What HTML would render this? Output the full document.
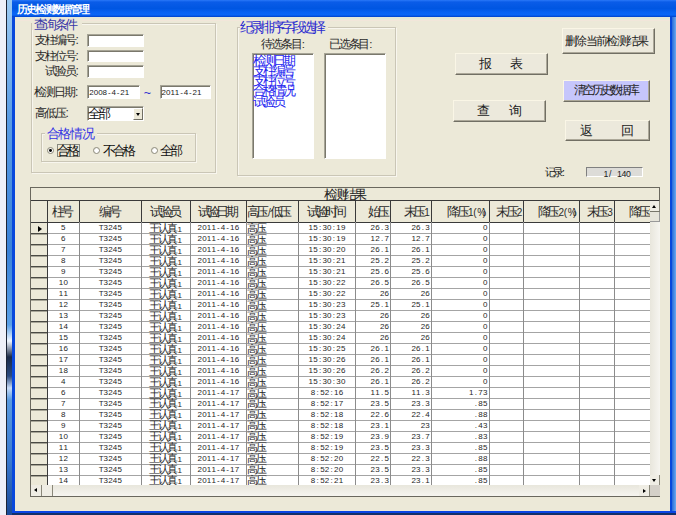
<!DOCTYPE html>
<html><head><meta charset="utf-8"><style>
html,body{margin:0;padding:0;width:676px;height:515px;overflow:hidden;background:#ece9d8}
body{position:relative;font-family:"Liberation Sans",sans-serif}
div{position:absolute}
.t{white-space:nowrap}
i{font-style:normal;display:inline-flex;justify-content:center;width:10px}
b{font-weight:normal}
s{text-decoration:none;display:inline-block;text-align:center;width:var(--p,4.65px)}
</style></head><body>
<div style="left:0px;top:0px;width:676px;height:515px;background:#eef0f9"></div>
<div style="left:6px;top:0px;width:1px;height:515px;background:#1c2436"></div>
<div style="left:7px;top:0px;width:5px;height:515px;background:linear-gradient(180deg,#9ccaf2 0px,#5a9ce4 120px,#3a82d8 250px,#5aa0e8 325px,#f0f6ff 341px,#1a2a48 357px,#2a4a80 376px,#c8dcf8 388px,#5a9ae0 400px,#3a7ad0 460px,#1a4a98 515px)"></div>
<div style="left:12px;top:0px;width:664px;height:515px;background:#0848dc"></div>
<div style="left:672px;top:17px;width:4px;height:498px;background:linear-gradient(90deg,#2a6ad8,#6aaaf0)"></div>
<div style="left:12px;top:0px;width:664px;height:17px;background:linear-gradient(180deg,#2a78f8 0%,#0a5ce8 12%,#0056e2 50%,#0862f2 72%,#0a66f6 88%,#0040c8 100%)"></div>
<div class="t" style="left:18px;top:3.5px;font-size:10.5px;line-height:10.5px;color:#fff;font-weight:bold;"><i style="width:8.9px">历</i><i style="width:8.9px">史</i><i style="width:8.9px">检</i><i style="width:8.9px">测</i><i style="width:8.9px">数</i><i style="width:8.9px">据</i><i style="width:8.9px">管</i><i style="width:8.9px">理</i></div>
<div style="left:12px;top:511px;width:664px;height:2px;background:#0a44e4"></div>
<div style="left:12px;top:513px;width:664px;height:2px;background:#12306a"></div>
<div style="left:15px;top:17px;width:655px;height:494px;background:#ece9d8"></div>
<div style="left:15px;top:17px;width:655px;height:1.5px;background:#e6e8d8"></div>
<div style="left:15px;top:19.5px;width:655px;height:1.5px;background:#f2e6da"></div>
<div style="left:30.5px;top:23px;width:185px;height:149.5px;border:1px solid #cac6b6;box-shadow:inset 1px 1px 0 #f8f6ee,1px 1px 0 #f8f6ee;box-sizing:border-box"></div>
<div style="left:31.5px;top:18px;width:50px;height:12px;background:#ece9d8"></div>
<div class="t" style="left:35.5px;top:18.5px;font-size:12.5px;line-height:12.5px;color:#3a3aa8;"><i style="width:10.3px">查</i><i style="width:10.3px">询</i><i style="width:10.3px">条</i><i style="width:10.3px">件</i></div>
<div class="t" style="left:35.5px;top:33.5px;font-size:12px;line-height:12px;color:#2a2a2a;"><i style="width:10px">支</i><i style="width:10px">柱</i><i style="width:10px">编</i><i style="width:10px">号</i>:</div>
<div class="t" style="left:35.5px;top:49.5px;font-size:12px;line-height:12px;color:#2a2a2a;"><i style="width:10px">支</i><i style="width:10px">柱</i><i style="width:10px">位</i><i style="width:10px">号</i>:</div>
<div class="t" style="left:45.5px;top:65px;font-size:12px;line-height:12px;color:#2a2a2a;"><i style="width:10px">试</i><i style="width:10px">验</i><i style="width:10px">员</i>:</div>
<div class="t" style="left:35px;top:85.5px;font-size:12px;line-height:12px;color:#2a2a2a;"><i style="width:10px">检</i><i style="width:10px">测</i><i style="width:10px">日</i><i style="width:10px">期</i>:</div>
<div class="t" style="left:35.5px;top:106.5px;font-size:12px;line-height:12px;color:#2a2a2a;"><i style="width:10px">高</i><i style="width:10px">低</i><i style="width:10px">压</i>:</div>
<div style="left:87px;top:34px;width:57px;height:13px;background:#fff;border-top:1px solid #a6a496;border-left:1px solid #a6a496;border-bottom:1px solid #fff;border-right:1px solid #fff;box-shadow:inset 1px 1px 0 #7a786c;box-sizing:border-box"></div>
<div style="left:87px;top:49.7px;width:57px;height:12.3px;background:#fff;border-top:1px solid #a6a496;border-left:1px solid #a6a496;border-bottom:1px solid #fff;border-right:1px solid #fff;box-shadow:inset 1px 1px 0 #7a786c;box-sizing:border-box"></div>
<div style="left:87px;top:65px;width:57px;height:12.5px;background:#fff;border-top:1px solid #a6a496;border-left:1px solid #a6a496;border-bottom:1px solid #fff;border-right:1px solid #fff;box-shadow:inset 1px 1px 0 #7a786c;box-sizing:border-box"></div>
<div style="left:87px;top:85.4px;width:53px;height:13.6px;background:#fff;border-top:1px solid #a6a496;border-left:1px solid #a6a496;border-bottom:1px solid #fff;border-right:1px solid #fff;box-shadow:inset 1px 1px 0 #7a786c;box-sizing:border-box"></div>
<div style="left:159.5px;top:85.4px;width:51.5px;height:13.6px;background:#fff;border-top:1px solid #a6a496;border-left:1px solid #a6a496;border-bottom:1px solid #fff;border-right:1px solid #fff;box-shadow:inset 1px 1px 0 #7a786c;box-sizing:border-box"></div>
<div class="t" style="left:89.3px;top:89.4px;font-size:8px;line-height:8px;color:#222;--p:4.45px"><s>2</s><s>0</s><s>0</s><s>8</s><s>-</s><s>4</s><s>-</s><s>2</s><s>1</s></div>
<div class="t" style="left:161.5px;top:89.4px;font-size:8px;line-height:8px;color:#222;--p:4.45px"><s>2</s><s>0</s><s>1</s><s>1</s><s>-</s><s>4</s><s>-</s><s>2</s><s>1</s></div>
<div class="t" style="left:143.8px;top:86.8px;font-size:12.5px;line-height:12.5px;color:#3030d0;">~</div>
<div style="left:87.2px;top:106.2px;width:56.4px;height:14.8px;background:#fff;border-top:1px solid #a6a496;border-left:1px solid #a6a496;border-bottom:1px solid #fff;border-right:1px solid #fff;box-shadow:inset 1px 1px 0 #7a786c;box-sizing:border-box"></div>
<div style="left:133px;top:108px;width:9.7px;height:12px;background:#ece9d8;border-top:1px solid #fff;border-left:1px solid #fff;border-right:1px solid #716f64;border-bottom:1px solid #716f64;box-sizing:border-box"></div>
<div style="left:135.8px;top:113px;width:0;height:0;border-left:2.5px solid transparent;border-right:2.5px solid transparent;border-top:3px solid #000"></div>
<div class="t" style="left:89px;top:107.8px;font-size:12.5px;line-height:12.5px;color:#111;"><i style="width:10.3px">全</i><i style="width:10.3px">部</i></div>
<div style="left:41px;top:132.8px;width:155px;height:29.5px;border:1px solid #cac6b6;box-shadow:inset 1px 1px 0 #f8f6ee,1px 1px 0 #f8f6ee;box-sizing:border-box"></div>
<div style="left:45px;top:127px;width:52px;height:12px;background:#ece9d8"></div>
<div class="t" style="left:47.2px;top:126.5px;font-size:13px;line-height:13px;color:#3434e4;"><i style="width:11.8px">合</i><i style="width:11.8px">格</i><i style="width:11.8px">情</i><i style="width:11.8px">况</i></div>
<div style="left:47.2px;top:146.8px;width:7px;height:7px;border-radius:50%;background:radial-gradient(circle at 60% 60%,#fff 40%,#dcdad0 100%);border:1px solid #8e8c7e;box-sizing:border-box"></div>
<div style="left:49.4px;top:149px;width:2.8px;height:2.8px;border-radius:50%;background:#000"></div>
<div style="left:93px;top:146.8px;width:7px;height:7px;border-radius:50%;background:radial-gradient(circle at 60% 60%,#fff 40%,#dcdad0 100%);border:1px solid #8e8c7e;box-sizing:border-box"></div>
<div style="left:150.7px;top:146.8px;width:7px;height:7px;border-radius:50%;background:radial-gradient(circle at 60% 60%,#fff 40%,#dcdad0 100%);border:1px solid #8e8c7e;box-sizing:border-box"></div>
<div style="left:57.2px;top:143.5px;width:22.5px;height:13px;border:1px solid #8a8a80;box-sizing:border-box"></div>
<div class="t" style="left:58.2px;top:144.5px;font-size:12.5px;line-height:12.5px;color:#111;"><i style="width:10px">合</i><i style="width:10px">格</i></div>
<div class="t" style="left:104.5px;top:144.5px;font-size:12.5px;line-height:12.5px;color:#111;"><i style="width:10px">不</i><i style="width:10px">合</i><i style="width:10px">格</i></div>
<div class="t" style="left:160.8px;top:144.5px;font-size:12.5px;line-height:12.5px;color:#111;"><i style="width:10.5px">全</i><i style="width:10.5px">部</i></div>
<div style="left:236.5px;top:27.4px;width:159.5px;height:148.6px;border:1px solid #cac6b6;box-shadow:inset 1px 1px 0 #f8f6ee,1px 1px 0 #f8f6ee;box-sizing:border-box"></div>
<div style="left:240px;top:21px;width:88px;height:12px;background:#ece9d8"></div>
<div class="t" style="left:241.5px;top:20.6px;font-size:13.5px;line-height:13.5px;color:#2a2ad0;"><i style="width:10.4px">纪</i><i style="width:10.4px">录</i><i style="width:10.4px">排</i><i style="width:10.4px">序</i><i style="width:10.4px">字</i><i style="width:10.4px">段</i><i style="width:10.4px">选</i><i style="width:10.4px">择</i></div>
<div class="t" style="left:262.5px;top:39px;font-size:11.5px;line-height:11.5px;color:#2a2a2a;"><i style="width:9.8px">待</i><i style="width:9.8px">选</i><i style="width:9.8px">条</i><i style="width:9.8px">目</i>:</div>
<div class="t" style="left:330px;top:39px;font-size:11.5px;line-height:11.5px;color:#2a2a2a;"><i style="width:9.8px">已</i><i style="width:9.8px">选</i><i style="width:9.8px">条</i><i style="width:9.8px">目</i>:</div>
<div style="left:252.4px;top:53px;width:62px;height:105.6px;background:#fff;border-top:1px solid #a6a496;border-left:1px solid #a6a496;border-bottom:1px solid #fff;border-right:1px solid #fff;box-shadow:inset 1px 1px 0 #7a786c;box-sizing:border-box"></div>
<div style="left:324.3px;top:53px;width:62px;height:106px;background:#fff;border-top:1px solid #a6a496;border-left:1px solid #a6a496;border-bottom:1px solid #fff;border-right:1px solid #fff;box-shadow:inset 1px 1px 0 #7a786c;box-sizing:border-box"></div>
<div class="t" style="left:254.3px;top:53.8px;font-size:13px;line-height:13px;color:#2424f0;"><i style="width:10.2px">检</i><i style="width:10.2px">测</i><i style="width:10.2px">日</i><i style="width:10.2px">期</i></div>
<div class="t" style="left:254.3px;top:64px;font-size:13px;line-height:13px;color:#2424f0;"><i style="width:10.2px">支</i><i style="width:10.2px">柱</i><i style="width:10.2px">编</i><i style="width:10.2px">号</i></div>
<div class="t" style="left:254.3px;top:74.2px;font-size:13px;line-height:13px;color:#2424f0;"><i style="width:10.2px">支</i><i style="width:10.2px">柱</i><i style="width:10.2px">位</i><i style="width:10.2px">号</i></div>
<div class="t" style="left:254.3px;top:84.4px;font-size:13px;line-height:13px;color:#2424f0;"><i style="width:10.2px">合</i><i style="width:10.2px">格</i><i style="width:10.2px">情</i><i style="width:10.2px">况</i></div>
<div class="t" style="left:254.3px;top:94.6px;font-size:13px;line-height:13px;color:#2424f0;"><i style="width:10.2px">试</i><i style="width:10.2px">验</i><i style="width:10.2px">员</i></div>
<div style="left:561.5px;top:27.5px;width:93.2px;height:26px;background:#ece9dc;border-top:1px solid #faf6e6;border-left:1px solid #faf6e6;border-right:1px solid #716f64;border-bottom:1px solid #716f64;box-shadow:inset -1px -1px 0 #aca899;box-sizing:border-box"></div>
<div class="t" style="left:566px;top:35.8px;font-size:11.5px;line-height:11.5px;color:#222;"><i style="width:10.3px">删</i><i style="width:10.3px">除</i><i style="width:10.3px">当</i><i style="width:10.3px">前</i><i style="width:10.3px">检</i><i style="width:10.3px">测</i><i style="width:10.3px">结</i><i style="width:10.3px">果</i></div>
<div style="left:454.6px;top:53.3px;width:93px;height:21.4px;background:#ece9dc;border-top:1px solid #faf6e6;border-left:1px solid #faf6e6;border-right:1px solid #716f64;border-bottom:1px solid #716f64;box-shadow:inset -1px -1px 0 #aca899;box-sizing:border-box"></div>
<div class="t" style="left:480.2px;top:58px;font-size:12.5px;line-height:12.5px;color:#222;"><i style="width:10px">报</i></div>
<div class="t" style="left:511px;top:58px;font-size:12.5px;line-height:12.5px;color:#222;"><i style="width:10px">表</i></div>
<div style="left:562.8px;top:79.5px;width:87.5px;height:22.2px;background:#c6c6fc;border-top:1px solid #faf6e6;border-left:1px solid #faf6e6;border-right:1px solid #716f64;border-bottom:1px solid #716f64;box-shadow:inset -1px -1px 0 #aca899;box-sizing:border-box"></div>
<div class="t" style="left:575px;top:84.5px;font-size:11.5px;line-height:11.5px;color:#222;"><i style="width:9px">清</i><i style="width:9px">空</i><i style="width:9px">历</i><i style="width:9px">史</i><i style="width:9px">数</i><i style="width:9px">据</i><i style="width:9px">库</i></div>
<div style="left:453.3px;top:100.3px;width:92.7px;height:22px;background:#ece9dc;border-top:1px solid #faf6e6;border-left:1px solid #faf6e6;border-right:1px solid #716f64;border-bottom:1px solid #716f64;box-shadow:inset -1px -1px 0 #aca899;box-sizing:border-box"></div>
<div class="t" style="left:478.8px;top:104.5px;font-size:12.5px;line-height:12.5px;color:#222;"><i style="width:10px">查</i></div>
<div class="t" style="left:510.5px;top:104.5px;font-size:12.5px;line-height:12.5px;color:#222;"><i style="width:10px">询</i></div>
<div style="left:565px;top:119.7px;width:84.5px;height:21px;background:#ece9dc;border-top:1px solid #faf6e6;border-left:1px solid #faf6e6;border-right:1px solid #716f64;border-bottom:1px solid #716f64;box-shadow:inset -1px -1px 0 #aca899;box-sizing:border-box"></div>
<div class="t" style="left:581px;top:125px;font-size:12.5px;line-height:12.5px;color:#222;"><i style="width:10px">返</i></div>
<div class="t" style="left:622px;top:125px;font-size:12.5px;line-height:12.5px;color:#222;"><i style="width:10px">回</i></div>
<div class="t" style="left:546px;top:166.5px;font-size:10.5px;line-height:10.5px;color:#222;"><i style="width:8px">记</i><i style="width:8px">录</i>:</div>
<div style="left:586px;top:167px;width:56.8px;height:10.2px;background:#dddcd8;border-top:1px solid #808080;border-left:1px solid #808080;border-bottom:1px solid #fff;border-right:1px solid #fff;box-sizing:border-box"></div>
<div class="t" style="left:603.5px;top:170px;font-size:8.8px;line-height:8.8px;color:#222;--p:4.5px"><s>1</s><s>/</s><s> </s><s>1</s><s>4</s><s>0</s></div>
<div style="left:30px;top:187px;width:630px;height:310px;background:#ece9d8;border:1px solid #6a685e;box-sizing:border-box"></div>
<div style="left:31px;top:200px;width:628px;height:1px;background:#3a3a3a"></div>
<div class="t" style="left:326px;top:187.6px;font-size:13px;line-height:13px;color:#222;"><i style="width:9.8px">检</i><i style="width:9.8px">测</i><i style="width:9.8px">结</i><i style="width:9.8px">果</i></div>
<div style="left:31px;top:201px;width:618.5px;height:284.2px;overflow:hidden">
<div style="left:17px;top:21.1px;width:640px;height:263.1px;background:#fff"></div>
<div style="left:16px;top:0px;width:1px;height:21.1px;background:#3a3a3a"></div>
<div style="left:48px;top:0px;width:1px;height:21.1px;background:#3a3a3a"></div>
<div style="left:110px;top:0px;width:1px;height:21.1px;background:#3a3a3a"></div>
<div style="left:159px;top:0px;width:1px;height:21.1px;background:#3a3a3a"></div>
<div style="left:215px;top:0px;width:1px;height:21.1px;background:#3a3a3a"></div>
<div style="left:267px;top:0px;width:1px;height:21.1px;background:#3a3a3a"></div>
<div style="left:324px;top:0px;width:1px;height:21.1px;background:#3a3a3a"></div>
<div style="left:359px;top:0px;width:1px;height:21.1px;background:#3a3a3a"></div>
<div style="left:400px;top:0px;width:1px;height:21.1px;background:#3a3a3a"></div>
<div style="left:458px;top:0px;width:1px;height:21.1px;background:#3a3a3a"></div>
<div style="left:492px;top:0px;width:1px;height:21.1px;background:#3a3a3a"></div>
<div style="left:548px;top:0px;width:1px;height:21.1px;background:#3a3a3a"></div>
<div style="left:583px;top:0px;width:1px;height:21.1px;background:#3a3a3a"></div>
<div style="left:0px;top:21.1px;width:660px;height:1px;background:#3a3a3a"></div>
<div style="left:0px;top:32px;width:17px;height:1px;background:#4a4a44"></div>
<div style="left:0px;top:33px;width:17px;height:1px;background:#a8a698"></div>
<div style="left:17px;top:32px;width:640px;height:1px;background:#a4a4a4"></div>
<div style="left:0px;top:43px;width:17px;height:1px;background:#4a4a44"></div>
<div style="left:0px;top:44px;width:17px;height:1px;background:#a8a698"></div>
<div style="left:17px;top:43px;width:640px;height:1px;background:#a4a4a4"></div>
<div style="left:0px;top:54px;width:17px;height:1px;background:#4a4a44"></div>
<div style="left:0px;top:55px;width:17px;height:1px;background:#a8a698"></div>
<div style="left:17px;top:54px;width:640px;height:1px;background:#a4a4a4"></div>
<div style="left:0px;top:65px;width:17px;height:1px;background:#4a4a44"></div>
<div style="left:0px;top:66px;width:17px;height:1px;background:#a8a698"></div>
<div style="left:17px;top:65px;width:640px;height:1px;background:#a4a4a4"></div>
<div style="left:0px;top:76px;width:17px;height:1px;background:#4a4a44"></div>
<div style="left:0px;top:77px;width:17px;height:1px;background:#a8a698"></div>
<div style="left:17px;top:76px;width:640px;height:1px;background:#a4a4a4"></div>
<div style="left:0px;top:87px;width:17px;height:1px;background:#4a4a44"></div>
<div style="left:0px;top:88px;width:17px;height:1px;background:#a8a698"></div>
<div style="left:17px;top:87px;width:640px;height:1px;background:#a4a4a4"></div>
<div style="left:0px;top:98px;width:17px;height:1px;background:#4a4a44"></div>
<div style="left:0px;top:99px;width:17px;height:1px;background:#a8a698"></div>
<div style="left:17px;top:98px;width:640px;height:1px;background:#a4a4a4"></div>
<div style="left:0px;top:109px;width:17px;height:1px;background:#4a4a44"></div>
<div style="left:0px;top:110px;width:17px;height:1px;background:#a8a698"></div>
<div style="left:17px;top:109px;width:640px;height:1px;background:#a4a4a4"></div>
<div style="left:0px;top:120px;width:17px;height:1px;background:#4a4a44"></div>
<div style="left:0px;top:121px;width:17px;height:1px;background:#a8a698"></div>
<div style="left:17px;top:120px;width:640px;height:1px;background:#a4a4a4"></div>
<div style="left:0px;top:131px;width:17px;height:1px;background:#4a4a44"></div>
<div style="left:0px;top:132px;width:17px;height:1px;background:#a8a698"></div>
<div style="left:17px;top:131px;width:640px;height:1px;background:#a4a4a4"></div>
<div style="left:0px;top:142px;width:17px;height:1px;background:#4a4a44"></div>
<div style="left:0px;top:143px;width:17px;height:1px;background:#a8a698"></div>
<div style="left:17px;top:142px;width:640px;height:1px;background:#a4a4a4"></div>
<div style="left:0px;top:153px;width:17px;height:1px;background:#4a4a44"></div>
<div style="left:0px;top:154px;width:17px;height:1px;background:#a8a698"></div>
<div style="left:17px;top:153px;width:640px;height:1px;background:#a4a4a4"></div>
<div style="left:0px;top:164px;width:17px;height:1px;background:#4a4a44"></div>
<div style="left:0px;top:165px;width:17px;height:1px;background:#a8a698"></div>
<div style="left:17px;top:164px;width:640px;height:1px;background:#a4a4a4"></div>
<div style="left:0px;top:175px;width:17px;height:1px;background:#4a4a44"></div>
<div style="left:0px;top:176px;width:17px;height:1px;background:#a8a698"></div>
<div style="left:17px;top:175px;width:640px;height:1px;background:#a4a4a4"></div>
<div style="left:0px;top:186px;width:17px;height:1px;background:#4a4a44"></div>
<div style="left:0px;top:187px;width:17px;height:1px;background:#a8a698"></div>
<div style="left:17px;top:186px;width:640px;height:1px;background:#a4a4a4"></div>
<div style="left:0px;top:197px;width:17px;height:1px;background:#4a4a44"></div>
<div style="left:0px;top:198px;width:17px;height:1px;background:#a8a698"></div>
<div style="left:17px;top:197px;width:640px;height:1px;background:#a4a4a4"></div>
<div style="left:0px;top:208px;width:17px;height:1px;background:#4a4a44"></div>
<div style="left:0px;top:209px;width:17px;height:1px;background:#a8a698"></div>
<div style="left:17px;top:208px;width:640px;height:1px;background:#a4a4a4"></div>
<div style="left:0px;top:219px;width:17px;height:1px;background:#4a4a44"></div>
<div style="left:0px;top:220px;width:17px;height:1px;background:#a8a698"></div>
<div style="left:17px;top:219px;width:640px;height:1px;background:#a4a4a4"></div>
<div style="left:0px;top:230px;width:17px;height:1px;background:#4a4a44"></div>
<div style="left:0px;top:231px;width:17px;height:1px;background:#a8a698"></div>
<div style="left:17px;top:230px;width:640px;height:1px;background:#a4a4a4"></div>
<div style="left:0px;top:241px;width:17px;height:1px;background:#4a4a44"></div>
<div style="left:0px;top:242px;width:17px;height:1px;background:#a8a698"></div>
<div style="left:17px;top:241px;width:640px;height:1px;background:#a4a4a4"></div>
<div style="left:0px;top:252px;width:17px;height:1px;background:#4a4a44"></div>
<div style="left:0px;top:253px;width:17px;height:1px;background:#a8a698"></div>
<div style="left:17px;top:252px;width:640px;height:1px;background:#a4a4a4"></div>
<div style="left:0px;top:263px;width:17px;height:1px;background:#4a4a44"></div>
<div style="left:0px;top:264px;width:17px;height:1px;background:#a8a698"></div>
<div style="left:17px;top:263px;width:640px;height:1px;background:#a4a4a4"></div>
<div style="left:0px;top:274px;width:17px;height:1px;background:#4a4a44"></div>
<div style="left:0px;top:275px;width:17px;height:1px;background:#a8a698"></div>
<div style="left:17px;top:274px;width:640px;height:1px;background:#a4a4a4"></div>
<div style="left:48px;top:21.1px;width:1px;height:263.1px;background:#8c8c8c"></div>
<div style="left:110px;top:21.1px;width:1px;height:263.1px;background:#8c8c8c"></div>
<div style="left:159px;top:21.1px;width:1px;height:263.1px;background:#8c8c8c"></div>
<div style="left:215px;top:21.1px;width:1px;height:263.1px;background:#8c8c8c"></div>
<div style="left:267px;top:21.1px;width:1px;height:263.1px;background:#8c8c8c"></div>
<div style="left:324px;top:21.1px;width:1px;height:263.1px;background:#8c8c8c"></div>
<div style="left:359px;top:21.1px;width:1px;height:263.1px;background:#8c8c8c"></div>
<div style="left:400px;top:21.1px;width:1px;height:263.1px;background:#8c8c8c"></div>
<div style="left:458px;top:21.1px;width:1px;height:263.1px;background:#8c8c8c"></div>
<div style="left:492px;top:21.1px;width:1px;height:263.1px;background:#8c8c8c"></div>
<div style="left:548px;top:21.1px;width:1px;height:263.1px;background:#8c8c8c"></div>
<div style="left:583px;top:21.1px;width:1px;height:263.1px;background:#8c8c8c"></div>
<div style="left:16px;top:21.1px;width:1px;height:263.1px;background:#3a3a3a"></div>
<div class="t" style="left:16.5px;top:3.8px;font-size:13px;line-height:13px;color:#2a2a2a;text-align:center;width:31.6px;"><i style="width:9.3px">柱</i><i style="width:9.3px">号</i></div>
<div class="t" style="left:48.1px;top:3.8px;font-size:13px;line-height:13px;color:#2a2a2a;text-align:center;width:62.6px;"><i style="width:9.3px">编</i><i style="width:9.3px">号</i></div>
<div class="t" style="left:110.7px;top:3.8px;font-size:13px;line-height:13px;color:#2a2a2a;text-align:center;width:48.9px;"><i style="width:9.3px">试</i><i style="width:9.3px">验</i><i style="width:9.3px">员</i></div>
<div class="t" style="left:159.6px;top:3.8px;font-size:13px;line-height:13px;color:#2a2a2a;text-align:center;width:55.4px;"><i style="width:9.3px">试</i><i style="width:9.3px">验</i><i style="width:9.3px">日</i><i style="width:9.3px">期</i></div>
<div class="t" style="left:217.5px;top:3.8px;font-size:13px;line-height:13px;color:#2a2a2a;"><i style="width:9.3px">高</i><i style="width:9.3px">压</i><b style="font-size:10px"><s>/</s></b><i style="width:9.3px">低</i><i style="width:9.3px">压</i></div>
<div class="t" style="left:267.3px;top:3.8px;font-size:13px;line-height:13px;color:#2a2a2a;text-align:center;width:57.4px;"><i style="width:9.3px">试</i><i style="width:9.3px">验</i><i style="width:9.3px">时</i><i style="width:9.3px">间</i></div>
<div class="t" style="left:324.7px;top:3.8px;font-size:13px;line-height:13px;color:#2a2a2a;text-align:right;width:32.4px;"><i style="width:9.3px">始</i><i style="width:9.3px">压</i></div>
<div class="t" style="left:359.6px;top:3.8px;font-size:13px;line-height:13px;color:#2a2a2a;text-align:right;width:38.3px;"><i style="width:9.3px">末</i><i style="width:9.3px">压</i><b style="font-size:10px"><s>1</s></b></div>
<div class="t" style="left:400.4px;top:3.8px;font-size:13px;line-height:13px;color:#2a2a2a;text-align:right;width:55.1px;"><i style="width:9.3px">降</i><i style="width:9.3px">压</i><b style="font-size:10px"><s>1</s><s>(</s><s>%</s><s>)</s></b></div>
<div class="t" style="left:458px;top:3.8px;font-size:13px;line-height:13px;color:#2a2a2a;text-align:right;width:32.3px;"><i style="width:9.3px">末</i><i style="width:9.3px">压</i><b style="font-size:10px"><s>2</s></b></div>
<div class="t" style="left:492.8px;top:3.8px;font-size:13px;line-height:13px;color:#2a2a2a;text-align:right;width:53.2px;"><i style="width:9.3px">降</i><i style="width:9.3px">压</i><b style="font-size:10px"><s>2</s><s>(</s><s>%</s><s>)</s></b></div>
<div class="t" style="left:548.5px;top:3.8px;font-size:13px;line-height:13px;color:#2a2a2a;text-align:right;width:32.5px;"><i style="width:9.3px">末</i><i style="width:9.3px">压</i><b style="font-size:10px"><s>3</s></b></div>
<div class="t" style="left:583.5px;top:3.8px;font-size:13px;line-height:13px;color:#2a2a2a;text-align:right;width:53px;"><i style="width:9.3px">降</i><i style="width:9.3px">压</i><b style="font-size:10px"><s>3</s><s>(</s><s>%</s><s>)</s></b></div>
<div class="t" style="left:16.5px;top:23.4px;font-size:8px;line-height:8px;color:#262626;text-align:center;width:31.6px;"><s>5</s></div>
<div class="t" style="left:48.1px;top:23.4px;font-size:8px;line-height:8px;color:#262626;text-align:center;width:62.6px;"><s>T</s><s>3</s><s>2</s><s>4</s><s>5</s></div>
<div class="t" style="left:110.7px;top:21.8px;font-size:10.5px;line-height:10.5px;color:#262626;text-align:center;width:48.9px;"><i style="width:9px">王</i><i style="width:9px">认</i><i style="width:9px">真</i><b style="font-size:8px"><s>1</s></b></div>
<div class="t" style="left:159.6px;top:23.4px;font-size:8px;line-height:8px;color:#262626;text-align:center;width:55.4px;"><s>2</s><s>0</s><s>1</s><s>1</s><s>-</s><s>4</s><s>-</s><s>1</s><s>6</s></div>
<div class="t" style="left:217px;top:21.8px;font-size:10.5px;line-height:10.5px;color:#262626;"><i style="width:9px">高</i><i style="width:9px">压</i></div>
<div class="t" style="left:267.3px;top:23.4px;font-size:8px;line-height:8px;color:#262626;text-align:center;width:57.4px;"><s>1</s><s>5</s><s>:</s><s>3</s><s>0</s><s>:</s><s>1</s><s>9</s></div>
<div class="t" style="left:324.7px;top:23.4px;font-size:8px;line-height:8px;color:#262626;text-align:right;width:33.4px;"><s>2</s><s>6</s><s>.</s><s>3</s></div>
<div class="t" style="left:359.6px;top:23.4px;font-size:8px;line-height:8px;color:#262626;text-align:right;width:39.3px;"><s>2</s><s>6</s><s>.</s><s>3</s></div>
<div class="t" style="left:400.4px;top:23.4px;font-size:8px;line-height:8px;color:#262626;text-align:right;width:56.1px;"><s>0</s></div>
<div class="t" style="left:16.5px;top:34.38px;font-size:8px;line-height:8px;color:#262626;text-align:center;width:31.6px;"><s>6</s></div>
<div class="t" style="left:48.1px;top:34.38px;font-size:8px;line-height:8px;color:#262626;text-align:center;width:62.6px;"><s>T</s><s>3</s><s>2</s><s>4</s><s>5</s></div>
<div class="t" style="left:110.7px;top:32.78px;font-size:10.5px;line-height:10.5px;color:#262626;text-align:center;width:48.9px;"><i style="width:9px">王</i><i style="width:9px">认</i><i style="width:9px">真</i><b style="font-size:8px"><s>1</s></b></div>
<div class="t" style="left:159.6px;top:34.38px;font-size:8px;line-height:8px;color:#262626;text-align:center;width:55.4px;"><s>2</s><s>0</s><s>1</s><s>1</s><s>-</s><s>4</s><s>-</s><s>1</s><s>6</s></div>
<div class="t" style="left:217px;top:32.78px;font-size:10.5px;line-height:10.5px;color:#262626;"><i style="width:9px">高</i><i style="width:9px">压</i></div>
<div class="t" style="left:267.3px;top:34.38px;font-size:8px;line-height:8px;color:#262626;text-align:center;width:57.4px;"><s>1</s><s>5</s><s>:</s><s>3</s><s>0</s><s>:</s><s>1</s><s>9</s></div>
<div class="t" style="left:324.7px;top:34.38px;font-size:8px;line-height:8px;color:#262626;text-align:right;width:33.4px;"><s>1</s><s>2</s><s>.</s><s>7</s></div>
<div class="t" style="left:359.6px;top:34.38px;font-size:8px;line-height:8px;color:#262626;text-align:right;width:39.3px;"><s>1</s><s>2</s><s>.</s><s>7</s></div>
<div class="t" style="left:400.4px;top:34.38px;font-size:8px;line-height:8px;color:#262626;text-align:right;width:56.1px;"><s>0</s></div>
<div class="t" style="left:16.5px;top:45.36px;font-size:8px;line-height:8px;color:#262626;text-align:center;width:31.6px;"><s>7</s></div>
<div class="t" style="left:48.1px;top:45.36px;font-size:8px;line-height:8px;color:#262626;text-align:center;width:62.6px;"><s>T</s><s>3</s><s>2</s><s>4</s><s>5</s></div>
<div class="t" style="left:110.7px;top:43.76px;font-size:10.5px;line-height:10.5px;color:#262626;text-align:center;width:48.9px;"><i style="width:9px">王</i><i style="width:9px">认</i><i style="width:9px">真</i><b style="font-size:8px"><s>1</s></b></div>
<div class="t" style="left:159.6px;top:45.36px;font-size:8px;line-height:8px;color:#262626;text-align:center;width:55.4px;"><s>2</s><s>0</s><s>1</s><s>1</s><s>-</s><s>4</s><s>-</s><s>1</s><s>6</s></div>
<div class="t" style="left:217px;top:43.76px;font-size:10.5px;line-height:10.5px;color:#262626;"><i style="width:9px">高</i><i style="width:9px">压</i></div>
<div class="t" style="left:267.3px;top:45.36px;font-size:8px;line-height:8px;color:#262626;text-align:center;width:57.4px;"><s>1</s><s>5</s><s>:</s><s>3</s><s>0</s><s>:</s><s>2</s><s>0</s></div>
<div class="t" style="left:324.7px;top:45.36px;font-size:8px;line-height:8px;color:#262626;text-align:right;width:33.4px;"><s>2</s><s>6</s><s>.</s><s>1</s></div>
<div class="t" style="left:359.6px;top:45.36px;font-size:8px;line-height:8px;color:#262626;text-align:right;width:39.3px;"><s>2</s><s>6</s><s>.</s><s>1</s></div>
<div class="t" style="left:400.4px;top:45.36px;font-size:8px;line-height:8px;color:#262626;text-align:right;width:56.1px;"><s>0</s></div>
<div class="t" style="left:16.5px;top:56.34px;font-size:8px;line-height:8px;color:#262626;text-align:center;width:31.6px;"><s>8</s></div>
<div class="t" style="left:48.1px;top:56.34px;font-size:8px;line-height:8px;color:#262626;text-align:center;width:62.6px;"><s>T</s><s>3</s><s>2</s><s>4</s><s>5</s></div>
<div class="t" style="left:110.7px;top:54.74px;font-size:10.5px;line-height:10.5px;color:#262626;text-align:center;width:48.9px;"><i style="width:9px">王</i><i style="width:9px">认</i><i style="width:9px">真</i><b style="font-size:8px"><s>1</s></b></div>
<div class="t" style="left:159.6px;top:56.34px;font-size:8px;line-height:8px;color:#262626;text-align:center;width:55.4px;"><s>2</s><s>0</s><s>1</s><s>1</s><s>-</s><s>4</s><s>-</s><s>1</s><s>6</s></div>
<div class="t" style="left:217px;top:54.74px;font-size:10.5px;line-height:10.5px;color:#262626;"><i style="width:9px">高</i><i style="width:9px">压</i></div>
<div class="t" style="left:267.3px;top:56.34px;font-size:8px;line-height:8px;color:#262626;text-align:center;width:57.4px;"><s>1</s><s>5</s><s>:</s><s>3</s><s>0</s><s>:</s><s>2</s><s>1</s></div>
<div class="t" style="left:324.7px;top:56.34px;font-size:8px;line-height:8px;color:#262626;text-align:right;width:33.4px;"><s>2</s><s>5</s><s>.</s><s>2</s></div>
<div class="t" style="left:359.6px;top:56.34px;font-size:8px;line-height:8px;color:#262626;text-align:right;width:39.3px;"><s>2</s><s>5</s><s>.</s><s>2</s></div>
<div class="t" style="left:400.4px;top:56.34px;font-size:8px;line-height:8px;color:#262626;text-align:right;width:56.1px;"><s>0</s></div>
<div class="t" style="left:16.5px;top:67.32px;font-size:8px;line-height:8px;color:#262626;text-align:center;width:31.6px;"><s>9</s></div>
<div class="t" style="left:48.1px;top:67.32px;font-size:8px;line-height:8px;color:#262626;text-align:center;width:62.6px;"><s>T</s><s>3</s><s>2</s><s>4</s><s>5</s></div>
<div class="t" style="left:110.7px;top:65.72px;font-size:10.5px;line-height:10.5px;color:#262626;text-align:center;width:48.9px;"><i style="width:9px">王</i><i style="width:9px">认</i><i style="width:9px">真</i><b style="font-size:8px"><s>1</s></b></div>
<div class="t" style="left:159.6px;top:67.32px;font-size:8px;line-height:8px;color:#262626;text-align:center;width:55.4px;"><s>2</s><s>0</s><s>1</s><s>1</s><s>-</s><s>4</s><s>-</s><s>1</s><s>6</s></div>
<div class="t" style="left:217px;top:65.72px;font-size:10.5px;line-height:10.5px;color:#262626;"><i style="width:9px">高</i><i style="width:9px">压</i></div>
<div class="t" style="left:267.3px;top:67.32px;font-size:8px;line-height:8px;color:#262626;text-align:center;width:57.4px;"><s>1</s><s>5</s><s>:</s><s>3</s><s>0</s><s>:</s><s>2</s><s>1</s></div>
<div class="t" style="left:324.7px;top:67.32px;font-size:8px;line-height:8px;color:#262626;text-align:right;width:33.4px;"><s>2</s><s>5</s><s>.</s><s>6</s></div>
<div class="t" style="left:359.6px;top:67.32px;font-size:8px;line-height:8px;color:#262626;text-align:right;width:39.3px;"><s>2</s><s>5</s><s>.</s><s>6</s></div>
<div class="t" style="left:400.4px;top:67.32px;font-size:8px;line-height:8px;color:#262626;text-align:right;width:56.1px;"><s>0</s></div>
<div class="t" style="left:16.5px;top:78.3px;font-size:8px;line-height:8px;color:#262626;text-align:center;width:31.6px;"><s>1</s><s>0</s></div>
<div class="t" style="left:48.1px;top:78.3px;font-size:8px;line-height:8px;color:#262626;text-align:center;width:62.6px;"><s>T</s><s>3</s><s>2</s><s>4</s><s>5</s></div>
<div class="t" style="left:110.7px;top:76.7px;font-size:10.5px;line-height:10.5px;color:#262626;text-align:center;width:48.9px;"><i style="width:9px">王</i><i style="width:9px">认</i><i style="width:9px">真</i><b style="font-size:8px"><s>1</s></b></div>
<div class="t" style="left:159.6px;top:78.3px;font-size:8px;line-height:8px;color:#262626;text-align:center;width:55.4px;"><s>2</s><s>0</s><s>1</s><s>1</s><s>-</s><s>4</s><s>-</s><s>1</s><s>6</s></div>
<div class="t" style="left:217px;top:76.7px;font-size:10.5px;line-height:10.5px;color:#262626;"><i style="width:9px">高</i><i style="width:9px">压</i></div>
<div class="t" style="left:267.3px;top:78.3px;font-size:8px;line-height:8px;color:#262626;text-align:center;width:57.4px;"><s>1</s><s>5</s><s>:</s><s>3</s><s>0</s><s>:</s><s>2</s><s>2</s></div>
<div class="t" style="left:324.7px;top:78.3px;font-size:8px;line-height:8px;color:#262626;text-align:right;width:33.4px;"><s>2</s><s>6</s><s>.</s><s>5</s></div>
<div class="t" style="left:359.6px;top:78.3px;font-size:8px;line-height:8px;color:#262626;text-align:right;width:39.3px;"><s>2</s><s>6</s><s>.</s><s>5</s></div>
<div class="t" style="left:400.4px;top:78.3px;font-size:8px;line-height:8px;color:#262626;text-align:right;width:56.1px;"><s>0</s></div>
<div class="t" style="left:16.5px;top:89.28px;font-size:8px;line-height:8px;color:#262626;text-align:center;width:31.6px;"><s>1</s><s>1</s></div>
<div class="t" style="left:48.1px;top:89.28px;font-size:8px;line-height:8px;color:#262626;text-align:center;width:62.6px;"><s>T</s><s>3</s><s>2</s><s>4</s><s>5</s></div>
<div class="t" style="left:110.7px;top:87.68px;font-size:10.5px;line-height:10.5px;color:#262626;text-align:center;width:48.9px;"><i style="width:9px">王</i><i style="width:9px">认</i><i style="width:9px">真</i><b style="font-size:8px"><s>1</s></b></div>
<div class="t" style="left:159.6px;top:89.28px;font-size:8px;line-height:8px;color:#262626;text-align:center;width:55.4px;"><s>2</s><s>0</s><s>1</s><s>1</s><s>-</s><s>4</s><s>-</s><s>1</s><s>6</s></div>
<div class="t" style="left:217px;top:87.68px;font-size:10.5px;line-height:10.5px;color:#262626;"><i style="width:9px">高</i><i style="width:9px">压</i></div>
<div class="t" style="left:267.3px;top:89.28px;font-size:8px;line-height:8px;color:#262626;text-align:center;width:57.4px;"><s>1</s><s>5</s><s>:</s><s>3</s><s>0</s><s>:</s><s>2</s><s>2</s></div>
<div class="t" style="left:324.7px;top:89.28px;font-size:8px;line-height:8px;color:#262626;text-align:right;width:33.4px;"><s>2</s><s>6</s></div>
<div class="t" style="left:359.6px;top:89.28px;font-size:8px;line-height:8px;color:#262626;text-align:right;width:39.3px;"><s>2</s><s>6</s></div>
<div class="t" style="left:400.4px;top:89.28px;font-size:8px;line-height:8px;color:#262626;text-align:right;width:56.1px;"><s>0</s></div>
<div class="t" style="left:16.5px;top:100.26px;font-size:8px;line-height:8px;color:#262626;text-align:center;width:31.6px;"><s>1</s><s>2</s></div>
<div class="t" style="left:48.1px;top:100.26px;font-size:8px;line-height:8px;color:#262626;text-align:center;width:62.6px;"><s>T</s><s>3</s><s>2</s><s>4</s><s>5</s></div>
<div class="t" style="left:110.7px;top:98.66px;font-size:10.5px;line-height:10.5px;color:#262626;text-align:center;width:48.9px;"><i style="width:9px">王</i><i style="width:9px">认</i><i style="width:9px">真</i><b style="font-size:8px"><s>1</s></b></div>
<div class="t" style="left:159.6px;top:100.26px;font-size:8px;line-height:8px;color:#262626;text-align:center;width:55.4px;"><s>2</s><s>0</s><s>1</s><s>1</s><s>-</s><s>4</s><s>-</s><s>1</s><s>6</s></div>
<div class="t" style="left:217px;top:98.66px;font-size:10.5px;line-height:10.5px;color:#262626;"><i style="width:9px">高</i><i style="width:9px">压</i></div>
<div class="t" style="left:267.3px;top:100.26px;font-size:8px;line-height:8px;color:#262626;text-align:center;width:57.4px;"><s>1</s><s>5</s><s>:</s><s>3</s><s>0</s><s>:</s><s>2</s><s>3</s></div>
<div class="t" style="left:324.7px;top:100.26px;font-size:8px;line-height:8px;color:#262626;text-align:right;width:33.4px;"><s>2</s><s>5</s><s>.</s><s>1</s></div>
<div class="t" style="left:359.6px;top:100.26px;font-size:8px;line-height:8px;color:#262626;text-align:right;width:39.3px;"><s>2</s><s>5</s><s>.</s><s>1</s></div>
<div class="t" style="left:400.4px;top:100.26px;font-size:8px;line-height:8px;color:#262626;text-align:right;width:56.1px;"><s>0</s></div>
<div class="t" style="left:16.5px;top:111.24px;font-size:8px;line-height:8px;color:#262626;text-align:center;width:31.6px;"><s>1</s><s>3</s></div>
<div class="t" style="left:48.1px;top:111.24px;font-size:8px;line-height:8px;color:#262626;text-align:center;width:62.6px;"><s>T</s><s>3</s><s>2</s><s>4</s><s>5</s></div>
<div class="t" style="left:110.7px;top:109.64px;font-size:10.5px;line-height:10.5px;color:#262626;text-align:center;width:48.9px;"><i style="width:9px">王</i><i style="width:9px">认</i><i style="width:9px">真</i><b style="font-size:8px"><s>1</s></b></div>
<div class="t" style="left:159.6px;top:111.24px;font-size:8px;line-height:8px;color:#262626;text-align:center;width:55.4px;"><s>2</s><s>0</s><s>1</s><s>1</s><s>-</s><s>4</s><s>-</s><s>1</s><s>6</s></div>
<div class="t" style="left:217px;top:109.64px;font-size:10.5px;line-height:10.5px;color:#262626;"><i style="width:9px">高</i><i style="width:9px">压</i></div>
<div class="t" style="left:267.3px;top:111.24px;font-size:8px;line-height:8px;color:#262626;text-align:center;width:57.4px;"><s>1</s><s>5</s><s>:</s><s>3</s><s>0</s><s>:</s><s>2</s><s>3</s></div>
<div class="t" style="left:324.7px;top:111.24px;font-size:8px;line-height:8px;color:#262626;text-align:right;width:33.4px;"><s>2</s><s>6</s></div>
<div class="t" style="left:359.6px;top:111.24px;font-size:8px;line-height:8px;color:#262626;text-align:right;width:39.3px;"><s>2</s><s>6</s></div>
<div class="t" style="left:400.4px;top:111.24px;font-size:8px;line-height:8px;color:#262626;text-align:right;width:56.1px;"><s>0</s></div>
<div class="t" style="left:16.5px;top:122.22px;font-size:8px;line-height:8px;color:#262626;text-align:center;width:31.6px;"><s>1</s><s>4</s></div>
<div class="t" style="left:48.1px;top:122.22px;font-size:8px;line-height:8px;color:#262626;text-align:center;width:62.6px;"><s>T</s><s>3</s><s>2</s><s>4</s><s>5</s></div>
<div class="t" style="left:110.7px;top:120.62px;font-size:10.5px;line-height:10.5px;color:#262626;text-align:center;width:48.9px;"><i style="width:9px">王</i><i style="width:9px">认</i><i style="width:9px">真</i><b style="font-size:8px"><s>1</s></b></div>
<div class="t" style="left:159.6px;top:122.22px;font-size:8px;line-height:8px;color:#262626;text-align:center;width:55.4px;"><s>2</s><s>0</s><s>1</s><s>1</s><s>-</s><s>4</s><s>-</s><s>1</s><s>6</s></div>
<div class="t" style="left:217px;top:120.62px;font-size:10.5px;line-height:10.5px;color:#262626;"><i style="width:9px">高</i><i style="width:9px">压</i></div>
<div class="t" style="left:267.3px;top:122.22px;font-size:8px;line-height:8px;color:#262626;text-align:center;width:57.4px;"><s>1</s><s>5</s><s>:</s><s>3</s><s>0</s><s>:</s><s>2</s><s>4</s></div>
<div class="t" style="left:324.7px;top:122.22px;font-size:8px;line-height:8px;color:#262626;text-align:right;width:33.4px;"><s>2</s><s>6</s></div>
<div class="t" style="left:359.6px;top:122.22px;font-size:8px;line-height:8px;color:#262626;text-align:right;width:39.3px;"><s>2</s><s>6</s></div>
<div class="t" style="left:400.4px;top:122.22px;font-size:8px;line-height:8px;color:#262626;text-align:right;width:56.1px;"><s>0</s></div>
<div class="t" style="left:16.5px;top:133.2px;font-size:8px;line-height:8px;color:#262626;text-align:center;width:31.6px;"><s>1</s><s>5</s></div>
<div class="t" style="left:48.1px;top:133.2px;font-size:8px;line-height:8px;color:#262626;text-align:center;width:62.6px;"><s>T</s><s>3</s><s>2</s><s>4</s><s>5</s></div>
<div class="t" style="left:110.7px;top:131.6px;font-size:10.5px;line-height:10.5px;color:#262626;text-align:center;width:48.9px;"><i style="width:9px">王</i><i style="width:9px">认</i><i style="width:9px">真</i><b style="font-size:8px"><s>1</s></b></div>
<div class="t" style="left:159.6px;top:133.2px;font-size:8px;line-height:8px;color:#262626;text-align:center;width:55.4px;"><s>2</s><s>0</s><s>1</s><s>1</s><s>-</s><s>4</s><s>-</s><s>1</s><s>6</s></div>
<div class="t" style="left:217px;top:131.6px;font-size:10.5px;line-height:10.5px;color:#262626;"><i style="width:9px">高</i><i style="width:9px">压</i></div>
<div class="t" style="left:267.3px;top:133.2px;font-size:8px;line-height:8px;color:#262626;text-align:center;width:57.4px;"><s>1</s><s>5</s><s>:</s><s>3</s><s>0</s><s>:</s><s>2</s><s>4</s></div>
<div class="t" style="left:324.7px;top:133.2px;font-size:8px;line-height:8px;color:#262626;text-align:right;width:33.4px;"><s>2</s><s>6</s></div>
<div class="t" style="left:359.6px;top:133.2px;font-size:8px;line-height:8px;color:#262626;text-align:right;width:39.3px;"><s>2</s><s>6</s></div>
<div class="t" style="left:400.4px;top:133.2px;font-size:8px;line-height:8px;color:#262626;text-align:right;width:56.1px;"><s>0</s></div>
<div class="t" style="left:16.5px;top:144.18px;font-size:8px;line-height:8px;color:#262626;text-align:center;width:31.6px;"><s>1</s><s>6</s></div>
<div class="t" style="left:48.1px;top:144.18px;font-size:8px;line-height:8px;color:#262626;text-align:center;width:62.6px;"><s>T</s><s>3</s><s>2</s><s>4</s><s>5</s></div>
<div class="t" style="left:110.7px;top:142.58px;font-size:10.5px;line-height:10.5px;color:#262626;text-align:center;width:48.9px;"><i style="width:9px">王</i><i style="width:9px">认</i><i style="width:9px">真</i><b style="font-size:8px"><s>1</s></b></div>
<div class="t" style="left:159.6px;top:144.18px;font-size:8px;line-height:8px;color:#262626;text-align:center;width:55.4px;"><s>2</s><s>0</s><s>1</s><s>1</s><s>-</s><s>4</s><s>-</s><s>1</s><s>6</s></div>
<div class="t" style="left:217px;top:142.58px;font-size:10.5px;line-height:10.5px;color:#262626;"><i style="width:9px">高</i><i style="width:9px">压</i></div>
<div class="t" style="left:267.3px;top:144.18px;font-size:8px;line-height:8px;color:#262626;text-align:center;width:57.4px;"><s>1</s><s>5</s><s>:</s><s>3</s><s>0</s><s>:</s><s>2</s><s>5</s></div>
<div class="t" style="left:324.7px;top:144.18px;font-size:8px;line-height:8px;color:#262626;text-align:right;width:33.4px;"><s>2</s><s>6</s><s>.</s><s>1</s></div>
<div class="t" style="left:359.6px;top:144.18px;font-size:8px;line-height:8px;color:#262626;text-align:right;width:39.3px;"><s>2</s><s>6</s><s>.</s><s>1</s></div>
<div class="t" style="left:400.4px;top:144.18px;font-size:8px;line-height:8px;color:#262626;text-align:right;width:56.1px;"><s>0</s></div>
<div class="t" style="left:16.5px;top:155.16px;font-size:8px;line-height:8px;color:#262626;text-align:center;width:31.6px;"><s>1</s><s>7</s></div>
<div class="t" style="left:48.1px;top:155.16px;font-size:8px;line-height:8px;color:#262626;text-align:center;width:62.6px;"><s>T</s><s>3</s><s>2</s><s>4</s><s>5</s></div>
<div class="t" style="left:110.7px;top:153.56px;font-size:10.5px;line-height:10.5px;color:#262626;text-align:center;width:48.9px;"><i style="width:9px">王</i><i style="width:9px">认</i><i style="width:9px">真</i><b style="font-size:8px"><s>1</s></b></div>
<div class="t" style="left:159.6px;top:155.16px;font-size:8px;line-height:8px;color:#262626;text-align:center;width:55.4px;"><s>2</s><s>0</s><s>1</s><s>1</s><s>-</s><s>4</s><s>-</s><s>1</s><s>6</s></div>
<div class="t" style="left:217px;top:153.56px;font-size:10.5px;line-height:10.5px;color:#262626;"><i style="width:9px">高</i><i style="width:9px">压</i></div>
<div class="t" style="left:267.3px;top:155.16px;font-size:8px;line-height:8px;color:#262626;text-align:center;width:57.4px;"><s>1</s><s>5</s><s>:</s><s>3</s><s>0</s><s>:</s><s>2</s><s>6</s></div>
<div class="t" style="left:324.7px;top:155.16px;font-size:8px;line-height:8px;color:#262626;text-align:right;width:33.4px;"><s>2</s><s>6</s><s>.</s><s>1</s></div>
<div class="t" style="left:359.6px;top:155.16px;font-size:8px;line-height:8px;color:#262626;text-align:right;width:39.3px;"><s>2</s><s>6</s><s>.</s><s>1</s></div>
<div class="t" style="left:400.4px;top:155.16px;font-size:8px;line-height:8px;color:#262626;text-align:right;width:56.1px;"><s>0</s></div>
<div class="t" style="left:16.5px;top:166.14px;font-size:8px;line-height:8px;color:#262626;text-align:center;width:31.6px;"><s>1</s><s>8</s></div>
<div class="t" style="left:48.1px;top:166.14px;font-size:8px;line-height:8px;color:#262626;text-align:center;width:62.6px;"><s>T</s><s>3</s><s>2</s><s>4</s><s>5</s></div>
<div class="t" style="left:110.7px;top:164.54px;font-size:10.5px;line-height:10.5px;color:#262626;text-align:center;width:48.9px;"><i style="width:9px">王</i><i style="width:9px">认</i><i style="width:9px">真</i><b style="font-size:8px"><s>1</s></b></div>
<div class="t" style="left:159.6px;top:166.14px;font-size:8px;line-height:8px;color:#262626;text-align:center;width:55.4px;"><s>2</s><s>0</s><s>1</s><s>1</s><s>-</s><s>4</s><s>-</s><s>1</s><s>6</s></div>
<div class="t" style="left:217px;top:164.54px;font-size:10.5px;line-height:10.5px;color:#262626;"><i style="width:9px">高</i><i style="width:9px">压</i></div>
<div class="t" style="left:267.3px;top:166.14px;font-size:8px;line-height:8px;color:#262626;text-align:center;width:57.4px;"><s>1</s><s>5</s><s>:</s><s>3</s><s>0</s><s>:</s><s>2</s><s>6</s></div>
<div class="t" style="left:324.7px;top:166.14px;font-size:8px;line-height:8px;color:#262626;text-align:right;width:33.4px;"><s>2</s><s>6</s><s>.</s><s>2</s></div>
<div class="t" style="left:359.6px;top:166.14px;font-size:8px;line-height:8px;color:#262626;text-align:right;width:39.3px;"><s>2</s><s>6</s><s>.</s><s>2</s></div>
<div class="t" style="left:400.4px;top:166.14px;font-size:8px;line-height:8px;color:#262626;text-align:right;width:56.1px;"><s>0</s></div>
<div class="t" style="left:16.5px;top:177.12px;font-size:8px;line-height:8px;color:#262626;text-align:center;width:31.6px;"><s>4</s></div>
<div class="t" style="left:48.1px;top:177.12px;font-size:8px;line-height:8px;color:#262626;text-align:center;width:62.6px;"><s>T</s><s>3</s><s>2</s><s>4</s><s>5</s></div>
<div class="t" style="left:110.7px;top:175.52px;font-size:10.5px;line-height:10.5px;color:#262626;text-align:center;width:48.9px;"><i style="width:9px">王</i><i style="width:9px">认</i><i style="width:9px">真</i><b style="font-size:8px"><s>1</s></b></div>
<div class="t" style="left:159.6px;top:177.12px;font-size:8px;line-height:8px;color:#262626;text-align:center;width:55.4px;"><s>2</s><s>0</s><s>1</s><s>1</s><s>-</s><s>4</s><s>-</s><s>1</s><s>6</s></div>
<div class="t" style="left:217px;top:175.52px;font-size:10.5px;line-height:10.5px;color:#262626;"><i style="width:9px">高</i><i style="width:9px">压</i></div>
<div class="t" style="left:267.3px;top:177.12px;font-size:8px;line-height:8px;color:#262626;text-align:center;width:57.4px;"><s>1</s><s>5</s><s>:</s><s>3</s><s>0</s><s>:</s><s>3</s><s>0</s></div>
<div class="t" style="left:324.7px;top:177.12px;font-size:8px;line-height:8px;color:#262626;text-align:right;width:33.4px;"><s>2</s><s>6</s><s>.</s><s>1</s></div>
<div class="t" style="left:359.6px;top:177.12px;font-size:8px;line-height:8px;color:#262626;text-align:right;width:39.3px;"><s>2</s><s>6</s><s>.</s><s>2</s></div>
<div class="t" style="left:400.4px;top:177.12px;font-size:8px;line-height:8px;color:#262626;text-align:right;width:56.1px;"><s>0</s></div>
<div class="t" style="left:16.5px;top:188.1px;font-size:8px;line-height:8px;color:#262626;text-align:center;width:31.6px;"><s>6</s></div>
<div class="t" style="left:48.1px;top:188.1px;font-size:8px;line-height:8px;color:#262626;text-align:center;width:62.6px;"><s>T</s><s>3</s><s>2</s><s>4</s><s>5</s></div>
<div class="t" style="left:110.7px;top:186.5px;font-size:10.5px;line-height:10.5px;color:#262626;text-align:center;width:48.9px;"><i style="width:9px">王</i><i style="width:9px">认</i><i style="width:9px">真</i><b style="font-size:8px"><s>1</s></b></div>
<div class="t" style="left:159.6px;top:188.1px;font-size:8px;line-height:8px;color:#262626;text-align:center;width:55.4px;"><s>2</s><s>0</s><s>1</s><s>1</s><s>-</s><s>4</s><s>-</s><s>1</s><s>7</s></div>
<div class="t" style="left:217px;top:186.5px;font-size:10.5px;line-height:10.5px;color:#262626;"><i style="width:9px">高</i><i style="width:9px">压</i></div>
<div class="t" style="left:267.3px;top:188.1px;font-size:8px;line-height:8px;color:#262626;text-align:center;width:57.4px;"><s>8</s><s>:</s><s>5</s><s>2</s><s>:</s><s>1</s><s>6</s></div>
<div class="t" style="left:324.7px;top:188.1px;font-size:8px;line-height:8px;color:#262626;text-align:right;width:33.4px;"><s>1</s><s>1</s><s>.</s><s>5</s></div>
<div class="t" style="left:359.6px;top:188.1px;font-size:8px;line-height:8px;color:#262626;text-align:right;width:39.3px;"><s>1</s><s>1</s><s>.</s><s>3</s></div>
<div class="t" style="left:400.4px;top:188.1px;font-size:8px;line-height:8px;color:#262626;text-align:right;width:56.1px;"><s>1</s><s>.</s><s>7</s><s>3</s></div>
<div class="t" style="left:16.5px;top:199.08px;font-size:8px;line-height:8px;color:#262626;text-align:center;width:31.6px;"><s>7</s></div>
<div class="t" style="left:48.1px;top:199.08px;font-size:8px;line-height:8px;color:#262626;text-align:center;width:62.6px;"><s>T</s><s>3</s><s>2</s><s>4</s><s>5</s></div>
<div class="t" style="left:110.7px;top:197.48px;font-size:10.5px;line-height:10.5px;color:#262626;text-align:center;width:48.9px;"><i style="width:9px">王</i><i style="width:9px">认</i><i style="width:9px">真</i><b style="font-size:8px"><s>1</s></b></div>
<div class="t" style="left:159.6px;top:199.08px;font-size:8px;line-height:8px;color:#262626;text-align:center;width:55.4px;"><s>2</s><s>0</s><s>1</s><s>1</s><s>-</s><s>4</s><s>-</s><s>1</s><s>7</s></div>
<div class="t" style="left:217px;top:197.48px;font-size:10.5px;line-height:10.5px;color:#262626;"><i style="width:9px">高</i><i style="width:9px">压</i></div>
<div class="t" style="left:267.3px;top:199.08px;font-size:8px;line-height:8px;color:#262626;text-align:center;width:57.4px;"><s>8</s><s>:</s><s>5</s><s>2</s><s>:</s><s>1</s><s>7</s></div>
<div class="t" style="left:324.7px;top:199.08px;font-size:8px;line-height:8px;color:#262626;text-align:right;width:33.4px;"><s>2</s><s>3</s><s>.</s><s>5</s></div>
<div class="t" style="left:359.6px;top:199.08px;font-size:8px;line-height:8px;color:#262626;text-align:right;width:39.3px;"><s>2</s><s>3</s><s>.</s><s>3</s></div>
<div class="t" style="left:400.4px;top:199.08px;font-size:8px;line-height:8px;color:#262626;text-align:right;width:56.1px;"><s>.</s><s>8</s><s>5</s></div>
<div class="t" style="left:16.5px;top:210.06px;font-size:8px;line-height:8px;color:#262626;text-align:center;width:31.6px;"><s>8</s></div>
<div class="t" style="left:48.1px;top:210.06px;font-size:8px;line-height:8px;color:#262626;text-align:center;width:62.6px;"><s>T</s><s>3</s><s>2</s><s>4</s><s>5</s></div>
<div class="t" style="left:110.7px;top:208.46px;font-size:10.5px;line-height:10.5px;color:#262626;text-align:center;width:48.9px;"><i style="width:9px">王</i><i style="width:9px">认</i><i style="width:9px">真</i><b style="font-size:8px"><s>1</s></b></div>
<div class="t" style="left:159.6px;top:210.06px;font-size:8px;line-height:8px;color:#262626;text-align:center;width:55.4px;"><s>2</s><s>0</s><s>1</s><s>1</s><s>-</s><s>4</s><s>-</s><s>1</s><s>7</s></div>
<div class="t" style="left:217px;top:208.46px;font-size:10.5px;line-height:10.5px;color:#262626;"><i style="width:9px">高</i><i style="width:9px">压</i></div>
<div class="t" style="left:267.3px;top:210.06px;font-size:8px;line-height:8px;color:#262626;text-align:center;width:57.4px;"><s>8</s><s>:</s><s>5</s><s>2</s><s>:</s><s>1</s><s>8</s></div>
<div class="t" style="left:324.7px;top:210.06px;font-size:8px;line-height:8px;color:#262626;text-align:right;width:33.4px;"><s>2</s><s>2</s><s>.</s><s>6</s></div>
<div class="t" style="left:359.6px;top:210.06px;font-size:8px;line-height:8px;color:#262626;text-align:right;width:39.3px;"><s>2</s><s>2</s><s>.</s><s>4</s></div>
<div class="t" style="left:400.4px;top:210.06px;font-size:8px;line-height:8px;color:#262626;text-align:right;width:56.1px;"><s>.</s><s>8</s><s>8</s></div>
<div class="t" style="left:16.5px;top:221.04px;font-size:8px;line-height:8px;color:#262626;text-align:center;width:31.6px;"><s>9</s></div>
<div class="t" style="left:48.1px;top:221.04px;font-size:8px;line-height:8px;color:#262626;text-align:center;width:62.6px;"><s>T</s><s>3</s><s>2</s><s>4</s><s>5</s></div>
<div class="t" style="left:110.7px;top:219.44px;font-size:10.5px;line-height:10.5px;color:#262626;text-align:center;width:48.9px;"><i style="width:9px">王</i><i style="width:9px">认</i><i style="width:9px">真</i><b style="font-size:8px"><s>1</s></b></div>
<div class="t" style="left:159.6px;top:221.04px;font-size:8px;line-height:8px;color:#262626;text-align:center;width:55.4px;"><s>2</s><s>0</s><s>1</s><s>1</s><s>-</s><s>4</s><s>-</s><s>1</s><s>7</s></div>
<div class="t" style="left:217px;top:219.44px;font-size:10.5px;line-height:10.5px;color:#262626;"><i style="width:9px">高</i><i style="width:9px">压</i></div>
<div class="t" style="left:267.3px;top:221.04px;font-size:8px;line-height:8px;color:#262626;text-align:center;width:57.4px;"><s>8</s><s>:</s><s>5</s><s>2</s><s>:</s><s>1</s><s>8</s></div>
<div class="t" style="left:324.7px;top:221.04px;font-size:8px;line-height:8px;color:#262626;text-align:right;width:33.4px;"><s>2</s><s>3</s><s>.</s><s>1</s></div>
<div class="t" style="left:359.6px;top:221.04px;font-size:8px;line-height:8px;color:#262626;text-align:right;width:39.3px;"><s>2</s><s>3</s></div>
<div class="t" style="left:400.4px;top:221.04px;font-size:8px;line-height:8px;color:#262626;text-align:right;width:56.1px;"><s>.</s><s>4</s><s>3</s></div>
<div class="t" style="left:16.5px;top:232.02px;font-size:8px;line-height:8px;color:#262626;text-align:center;width:31.6px;"><s>1</s><s>0</s></div>
<div class="t" style="left:48.1px;top:232.02px;font-size:8px;line-height:8px;color:#262626;text-align:center;width:62.6px;"><s>T</s><s>3</s><s>2</s><s>4</s><s>5</s></div>
<div class="t" style="left:110.7px;top:230.42px;font-size:10.5px;line-height:10.5px;color:#262626;text-align:center;width:48.9px;"><i style="width:9px">王</i><i style="width:9px">认</i><i style="width:9px">真</i><b style="font-size:8px"><s>1</s></b></div>
<div class="t" style="left:159.6px;top:232.02px;font-size:8px;line-height:8px;color:#262626;text-align:center;width:55.4px;"><s>2</s><s>0</s><s>1</s><s>1</s><s>-</s><s>4</s><s>-</s><s>1</s><s>7</s></div>
<div class="t" style="left:217px;top:230.42px;font-size:10.5px;line-height:10.5px;color:#262626;"><i style="width:9px">高</i><i style="width:9px">压</i></div>
<div class="t" style="left:267.3px;top:232.02px;font-size:8px;line-height:8px;color:#262626;text-align:center;width:57.4px;"><s>8</s><s>:</s><s>5</s><s>2</s><s>:</s><s>1</s><s>9</s></div>
<div class="t" style="left:324.7px;top:232.02px;font-size:8px;line-height:8px;color:#262626;text-align:right;width:33.4px;"><s>2</s><s>3</s><s>.</s><s>9</s></div>
<div class="t" style="left:359.6px;top:232.02px;font-size:8px;line-height:8px;color:#262626;text-align:right;width:39.3px;"><s>2</s><s>3</s><s>.</s><s>7</s></div>
<div class="t" style="left:400.4px;top:232.02px;font-size:8px;line-height:8px;color:#262626;text-align:right;width:56.1px;"><s>.</s><s>8</s><s>3</s></div>
<div class="t" style="left:16.5px;top:243px;font-size:8px;line-height:8px;color:#262626;text-align:center;width:31.6px;"><s>1</s><s>1</s></div>
<div class="t" style="left:48.1px;top:243px;font-size:8px;line-height:8px;color:#262626;text-align:center;width:62.6px;"><s>T</s><s>3</s><s>2</s><s>4</s><s>5</s></div>
<div class="t" style="left:110.7px;top:241.4px;font-size:10.5px;line-height:10.5px;color:#262626;text-align:center;width:48.9px;"><i style="width:9px">王</i><i style="width:9px">认</i><i style="width:9px">真</i><b style="font-size:8px"><s>1</s></b></div>
<div class="t" style="left:159.6px;top:243px;font-size:8px;line-height:8px;color:#262626;text-align:center;width:55.4px;"><s>2</s><s>0</s><s>1</s><s>1</s><s>-</s><s>4</s><s>-</s><s>1</s><s>7</s></div>
<div class="t" style="left:217px;top:241.4px;font-size:10.5px;line-height:10.5px;color:#262626;"><i style="width:9px">高</i><i style="width:9px">压</i></div>
<div class="t" style="left:267.3px;top:243px;font-size:8px;line-height:8px;color:#262626;text-align:center;width:57.4px;"><s>8</s><s>:</s><s>5</s><s>2</s><s>:</s><s>1</s><s>9</s></div>
<div class="t" style="left:324.7px;top:243px;font-size:8px;line-height:8px;color:#262626;text-align:right;width:33.4px;"><s>2</s><s>3</s><s>.</s><s>5</s></div>
<div class="t" style="left:359.6px;top:243px;font-size:8px;line-height:8px;color:#262626;text-align:right;width:39.3px;"><s>2</s><s>3</s><s>.</s><s>3</s></div>
<div class="t" style="left:400.4px;top:243px;font-size:8px;line-height:8px;color:#262626;text-align:right;width:56.1px;"><s>.</s><s>8</s><s>5</s></div>
<div class="t" style="left:16.5px;top:253.98px;font-size:8px;line-height:8px;color:#262626;text-align:center;width:31.6px;"><s>1</s><s>2</s></div>
<div class="t" style="left:48.1px;top:253.98px;font-size:8px;line-height:8px;color:#262626;text-align:center;width:62.6px;"><s>T</s><s>3</s><s>2</s><s>4</s><s>5</s></div>
<div class="t" style="left:110.7px;top:252.38px;font-size:10.5px;line-height:10.5px;color:#262626;text-align:center;width:48.9px;"><i style="width:9px">王</i><i style="width:9px">认</i><i style="width:9px">真</i><b style="font-size:8px"><s>1</s></b></div>
<div class="t" style="left:159.6px;top:253.98px;font-size:8px;line-height:8px;color:#262626;text-align:center;width:55.4px;"><s>2</s><s>0</s><s>1</s><s>1</s><s>-</s><s>4</s><s>-</s><s>1</s><s>7</s></div>
<div class="t" style="left:217px;top:252.38px;font-size:10.5px;line-height:10.5px;color:#262626;"><i style="width:9px">高</i><i style="width:9px">压</i></div>
<div class="t" style="left:267.3px;top:253.98px;font-size:8px;line-height:8px;color:#262626;text-align:center;width:57.4px;"><s>8</s><s>:</s><s>5</s><s>2</s><s>:</s><s>2</s><s>0</s></div>
<div class="t" style="left:324.7px;top:253.98px;font-size:8px;line-height:8px;color:#262626;text-align:right;width:33.4px;"><s>2</s><s>2</s><s>.</s><s>5</s></div>
<div class="t" style="left:359.6px;top:253.98px;font-size:8px;line-height:8px;color:#262626;text-align:right;width:39.3px;"><s>2</s><s>2</s><s>.</s><s>3</s></div>
<div class="t" style="left:400.4px;top:253.98px;font-size:8px;line-height:8px;color:#262626;text-align:right;width:56.1px;"><s>.</s><s>8</s><s>8</s></div>
<div class="t" style="left:16.5px;top:264.96px;font-size:8px;line-height:8px;color:#262626;text-align:center;width:31.6px;"><s>1</s><s>3</s></div>
<div class="t" style="left:48.1px;top:264.96px;font-size:8px;line-height:8px;color:#262626;text-align:center;width:62.6px;"><s>T</s><s>3</s><s>2</s><s>4</s><s>5</s></div>
<div class="t" style="left:110.7px;top:263.36px;font-size:10.5px;line-height:10.5px;color:#262626;text-align:center;width:48.9px;"><i style="width:9px">王</i><i style="width:9px">认</i><i style="width:9px">真</i><b style="font-size:8px"><s>1</s></b></div>
<div class="t" style="left:159.6px;top:264.96px;font-size:8px;line-height:8px;color:#262626;text-align:center;width:55.4px;"><s>2</s><s>0</s><s>1</s><s>1</s><s>-</s><s>4</s><s>-</s><s>1</s><s>7</s></div>
<div class="t" style="left:217px;top:263.36px;font-size:10.5px;line-height:10.5px;color:#262626;"><i style="width:9px">高</i><i style="width:9px">压</i></div>
<div class="t" style="left:267.3px;top:264.96px;font-size:8px;line-height:8px;color:#262626;text-align:center;width:57.4px;"><s>8</s><s>:</s><s>5</s><s>2</s><s>:</s><s>2</s><s>0</s></div>
<div class="t" style="left:324.7px;top:264.96px;font-size:8px;line-height:8px;color:#262626;text-align:right;width:33.4px;"><s>2</s><s>3</s><s>.</s><s>5</s></div>
<div class="t" style="left:359.6px;top:264.96px;font-size:8px;line-height:8px;color:#262626;text-align:right;width:39.3px;"><s>2</s><s>3</s><s>.</s><s>3</s></div>
<div class="t" style="left:400.4px;top:264.96px;font-size:8px;line-height:8px;color:#262626;text-align:right;width:56.1px;"><s>.</s><s>8</s><s>5</s></div>
<div class="t" style="left:16.5px;top:275.94px;font-size:8px;line-height:8px;color:#262626;text-align:center;width:31.6px;"><s>1</s><s>4</s></div>
<div class="t" style="left:48.1px;top:275.94px;font-size:8px;line-height:8px;color:#262626;text-align:center;width:62.6px;"><s>T</s><s>3</s><s>2</s><s>4</s><s>5</s></div>
<div class="t" style="left:110.7px;top:274.34px;font-size:10.5px;line-height:10.5px;color:#262626;text-align:center;width:48.9px;"><i style="width:9px">王</i><i style="width:9px">认</i><i style="width:9px">真</i><b style="font-size:8px"><s>1</s></b></div>
<div class="t" style="left:159.6px;top:275.94px;font-size:8px;line-height:8px;color:#262626;text-align:center;width:55.4px;"><s>2</s><s>0</s><s>1</s><s>1</s><s>-</s><s>4</s><s>-</s><s>1</s><s>7</s></div>
<div class="t" style="left:217px;top:274.34px;font-size:10.5px;line-height:10.5px;color:#262626;"><i style="width:9px">高</i><i style="width:9px">压</i></div>
<div class="t" style="left:267.3px;top:275.94px;font-size:8px;line-height:8px;color:#262626;text-align:center;width:57.4px;"><s>8</s><s>:</s><s>5</s><s>2</s><s>:</s><s>2</s><s>1</s></div>
<div class="t" style="left:324.7px;top:275.94px;font-size:8px;line-height:8px;color:#262626;text-align:right;width:33.4px;"><s>2</s><s>3</s><s>.</s><s>3</s></div>
<div class="t" style="left:359.6px;top:275.94px;font-size:8px;line-height:8px;color:#262626;text-align:right;width:39.3px;"><s>2</s><s>3</s><s>.</s><s>1</s></div>
<div class="t" style="left:400.4px;top:275.94px;font-size:8px;line-height:8px;color:#262626;text-align:right;width:56.1px;"><s>.</s><s>8</s><s>5</s></div>
</div>
<div style="left:37.5px;top:225.5px;width:0;height:0;border-top:3.2px solid transparent;border-bottom:3.2px solid transparent;border-left:4px solid #000"></div>
<div style="left:649.5px;top:201px;width:10px;height:284.2px;background:linear-gradient(90deg,#e8e6dc,#f6f5f0)"></div>
<div style="left:649.5px;top:201px;width:10px;height:10.5px;background:#efede4;border-right:1px solid #8a887a;box-sizing:border-box"></div>
<div style="left:649.5px;top:210.5px;width:10px;height:1px;background:#77756a"></div>
<div style="left:652.3px;top:204.5px;width:0;height:0;border-left:2.7px solid transparent;border-right:2.7px solid transparent;border-bottom:3px solid #000"></div>
<div style="left:649.5px;top:211.5px;width:10px;height:10px;background:#e6e4da;border-right:1px solid #999;border-bottom:1px solid #999;box-sizing:border-box"></div>
<div style="left:649.5px;top:474.7px;width:10px;height:10.5px;background:#efede4;border-right:1px solid #8a887a;box-sizing:border-box"></div>
<div style="left:652.3px;top:478.6px;width:0;height:0;border-left:2.7px solid transparent;border-right:2.7px solid transparent;border-top:3px solid #000"></div>
<div style="left:31px;top:485.2px;width:618.5px;height:10.8px;background:linear-gradient(180deg,#e8e6dc,#f6f5f0)"></div>
<div style="left:31px;top:485.2px;width:10.5px;height:10.8px;background:#efede4;border-right:1px solid #8a887a;box-sizing:border-box"></div>
<div style="left:34px;top:488px;width:0;height:0;border-top:2.7px solid transparent;border-bottom:2.7px solid transparent;border-right:3px solid #000"></div>
<div style="left:41.5px;top:485.2px;width:11px;height:10.8px;background:#efede4;border-right:1px solid #8a887a;box-sizing:border-box"></div>
<div style="left:638.5px;top:485.2px;width:11px;height:10.8px;background:#efede4;border-right:1px solid #8a887a;box-sizing:border-box"></div>
<div style="left:642.5px;top:488.5px;width:0;height:0;border-top:2.7px solid transparent;border-bottom:2.7px solid transparent;border-left:3px solid #000"></div>
<div style="left:649.5px;top:485.2px;width:10px;height:10.8px;background:#d4d0c8"></div>
</body></html>
